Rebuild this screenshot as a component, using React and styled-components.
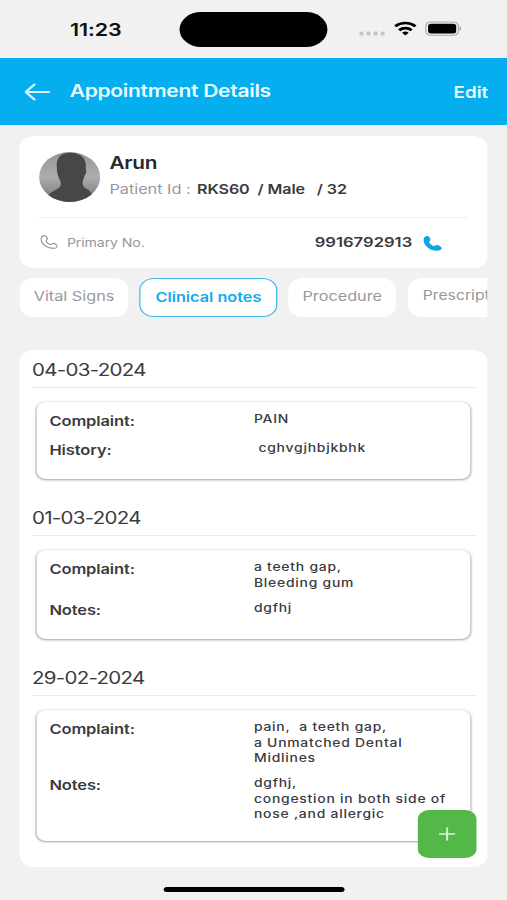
import styled, { createGlobalStyle } from "styled-components";

const GlobalStyle = createGlobalStyle`
  * {
    box-sizing: border-box;
    margin: 0;
    padding: 0;
  }

  body {
    background: #f1f1f1;
    font-family: Inter, "Liberation Sans", sans-serif;
    color: #3a3a40;
    overflow: hidden;
  }
`;

/* The 415px wide layout is stretched to the full 507px width */
const Screen = styled.div`
  position: relative;
  width: 415px;
  height: 900px;
  transform: scaleX(1.2217);
  transform-origin: 0 0;
  background: #f1f1f1;
  overflow: hidden;
  display: flex;
  flex-direction: column;
`;

const Text = styled.span`
  display: block;
  white-space: pre;
  font-size: ${(p) => p.$size}px;
  line-height: ${(p) => p.$line || 20}px;
  font-weight: ${(p) => p.$weight || 400};
  letter-spacing: ${(p) => p.$spacing || 0}px;
  color: ${(p) => p.$color || "inherit"};
`;

const StatusBar = styled.div`
  display: flex;
  height: 58px;
  flex-shrink: 0;
  padding: 12px 36px 0 57.3px;
`;

const Clock = styled.div`
  width: 90px;
  padding-top: 8px;
`;

const Island = styled.div`
  width: 121px;
  height: 35px;
  border-radius: 18px;
  background: #000;
`;

const StatusIcons = styled.div`
  display: flex;
  margin-left: 25.6px;
  padding-top: 9px;

  svg {
    display: block;
  }
`;

const Header = styled.header`
  display: flex;
  align-items: center;
  height: 67px;
  flex-shrink: 0;
  background: #04aeef;
  padding: 0 15.4px 0 20px;

  svg {
    margin-right: 16px;
  }
`;

const HeaderTitle = styled.h1`
  flex: 1;
  padding-bottom: 2px;
`;

const EditLink = styled.div`
  padding-top: 2px;
`;

const Content = styled.main`
  padding: 11px 15.6px 0 16.4px;
  display: flex;
  flex-direction: column;
`;

const Card = styled.section`
  background: #fff;
  border-radius: 12px;
`;

const PatientCard = styled(Card)`
  height: 132px;
  padding: 16px 16px 0 15.2px;
`;

const Profile = styled.div`
  display: flex;
  gap: 8px;
  height: 66px;
  border-bottom: 1px solid #f0f0f0;
`;

const ProfileText = styled.div`
  display: flex;
  flex-direction: column;
  gap: 6px;
  padding-top: 0.5px;
`;

const PatientLine = styled.div`
  display: flex;
  gap: 5.3px;
`;

const PhoneRow = styled.div`
  display: flex;
  align-items: center;
  padding-top: 13px;

  > svg {
    margin: 0 7.6px 0 1.2px;
  }
`;

const PrimaryLabel = styled.div`
  padding-top: 2px;
`;

const PhoneNumber = styled.div`
  display: flex;
  align-items: center;
  width: 104px;
  margin-left: auto;
  margin-right: 21.8px;
  justify-content: space-between;

  svg {
    margin-top: 2px;
  }
`;

const Tabs = styled.nav`
  display: flex;
  gap: 9.7px;
  margin-top: 10px;
  overflow: hidden;
`;

const Tab = styled.button`
  flex: 0 0 ${(p) => p.$width}px;
  height: 39px;
  border: 1px solid ${(p) => (p.$active ? "#3db9e8" : "#fff")};
  border-radius: 12px;
  background: #fff;
  font-family: inherit;
  display: flex;
  justify-content: center;
  padding-top: ${(p) => (p.$active ? 8 : 7)}px;
`;

const NotesCard = styled(Card)`
  height: 517px;
  margin-top: 33px;
  padding: 0 9.6px 0 9.8px;
`;

const Visit = styled.article`
  padding-top: ${(p) => (p.$first ? 8 : 27)}px;
`;

const VisitDate = styled.h2`
  height: 30px;
  padding-top: 1px;
  border-bottom: 1px solid #ebebeb;
`;

const VisitBox = styled.div`
  margin: 14px 4.4px 0 4.1px;
  padding: 10.4px 10px 8.6px 10.2px;
  background: #fff;
  border-radius: 8px;
  box-shadow: 0 1px 2px rgba(0, 0, 0, 0.32), 0 0 3px rgba(0, 0, 0, 0.12);
`;

const VisitRow = styled.div`
  display: flex;
  min-height: 19px;
  margin-bottom: 10px;
`;

const RowLabel = styled.div`
  width: 167.4px;
`;

const AddButton = styled.button`
  position: absolute;
  left: 341.6px;
  top: 809.5px;
  width: 48.5px;
  height: 48px;
  border: 0;
  border-radius: 9px;
  background: #53b848;
  display: flex;
  align-items: center;
  justify-content: center;
`;

const HomeIndicator = styled.div`
  width: 148px;
  height: 5px;
  margin: 20px auto 0 133.8px;
  border-radius: 3px;
  background: #000;
`;

const PHONE_PATH =
  "M6.200 2C4 2 2 4.500 2 7.200 2 15 9.500 22 17.200 22c2.800 0 5-1.800 5-3.900 0-1.400-3.200-3.700-4.700-3.900-1.600-.2-2.200 1.700-3.700 1.700-1.900 0-5.600-3.800-5.600-5.700 0-1.400 1.600-2 1.600-3.500C9.800 5.300 7.800 2 6.200 2z";

const HANDSET_PATH =
  "M6.600 1.800C4.500 1.200 2 3.500 2 6.800 2 15 9 22 17 22c3 0 5.500-1.700 5.500-3.800 0-1.500-3.300-4-5-4.300-1.700-.3-2.300 1.700-3.800 1.700-2 0-5.400-3.600-5.400-5.500 0-1.400 1.500-2 1.500-3.600 0-1.500-1.700-4.300-3.200-4.700z";

function Signal() {
  return (
    <svg width="84" height="15" viewBox="0 0 84 15">
      <g fill="#c4c4c4">
        <rect x="0.1" y="10.600" width="3.500" height="3.800" rx="1.500" />
        <rect x="5.900" y="10.600" width="3.500" height="3.800" rx="1.500" />
        <rect x="11.700" y="10.600" width="3.500" height="3.800" rx="1.500" />
        <rect x="17.500" y="10.600" width="3.500" height="3.800" rx="1.500" />
      </g>
      <g fill="none" stroke="#000" strokeWidth="2.6">
        <path d="M29.500 5.400a12 12 0 0 1 16.600 0" />
        <path d="M32.700 9.200a7.400 7.400 0 0 1 10.200 0" />
      </g>
      <path d="M37.800 14.500l-2.700-2.700a3.900 3.900 0 0 1 5.400 0z" fill="#000" />
      <rect x="54.600" y="1" width="26.6" height="13.200" rx="4" fill="none" stroke="#a9a9a9" />
      <rect x="56.400" y="2.800" width="23" height="9.600" rx="2.500" fill="#000" />
      <path d="M82.300 5.600v4c1.600-.6 1.600-3.400 0-4z" fill="#999" />
    </svg>
  );
}

function Avatar() {
  return (
    <svg width="50" height="50" viewBox="0 0 50 50">
      <defs>
        <linearGradient id="avatarBg" x1="0" y1="0" x2="0" y2="1">
          <stop offset="0" stopColor="#969696" />
          <stop offset="0.5" stopColor="#aeacad" />
          <stop offset="1" stopColor="#757575" />
        </linearGradient>
        <clipPath id="avatarClip">
          <circle cx="25" cy="25" r="25" />
        </clipPath>
      </defs>
      <g clipPath="url(#avatarClip)">
        <rect width="50" height="50" fill="url(#avatarBg)" />
        <path
          d="M26.500 .8C18 .2 14.300 6 14.400 13c.1 5 .4 9 1.400 12 .8 2.500 2 4 2 6.500 0 3.300-1.800 5-4.300 6.500C10 40.300 7 42 5 50h40c-1-6-1.500-8.500-4.500-12-2.500-1.700-5-3.500-4.900-7 .1-2.500 1.200-4.700 1.600-7.500 1.300-1.200 1.800-4.500 1-6.500C39 8 36 1.800 26.500 .8z"
          fill="#474747"
        />
      </g>
    </svg>
  );
}

const tabs = [
  { name: "Vital Signs", width: 88.4 },
  { name: "Clinical notes", width: 112.2, active: true },
  { name: "Procedure", width: 87.6 },
  { name: "Prescription", width: 98, size: 12.9 },
];

const visits = [
  {
    date: "04-03-2024",
    rows: [
      { label: "Complaint:", lines: ["PAIN"] },
      { label: "History:", lines: [" cghvgjhbjkbhk"] },
    ],
  },
  {
    date: "01-03-2024",
    rows: [
      { label: "Complaint:", lines: ["a teeth gap,", "Bleeding gum"] },
      { label: "Notes:", lines: ["dgfhj"] },
    ],
  },
  {
    date: "29-02-2024",
    rows: [
      {
        label: "Complaint:",
        lines: ["pain,  a teeth gap,", "a Unmatched Dental", "Midlines"],
      },
      {
        label: "Notes:",
        lines: ["dgfhj,", "congestion in both side of", "nose ,and allergic"],
      },
    ],
  },
];

function App() {
  return (
    <>
      <GlobalStyle />
      <Screen>
        <StatusBar>
          <Clock>
            <Text $size={17.6} $weight={600} $color="#111" $spacing={-0.1}>
              11:23
            </Text>
          </Clock>
          <Island />
          <StatusIcons>
            <Signal />
          </StatusIcons>
        </StatusBar>

        <Header>
          <svg width="21" height="18" viewBox="0 0 21 18" fill="none" stroke="#d9f6ff" strokeWidth="1.9" strokeLinecap="round" strokeLinejoin="round">
            <path d="M20 9H1M8.200 1.500L1 9l7.200 7.500" />
          </svg>
          <HeaderTitle>
            <Text $size={17.2} $weight={600} $color="#e8fbff" $spacing={-0.23}>
              Appointment Details
            </Text>
          </HeaderTitle>
          <EditLink>
            <Text $size={15.4} $weight={600} $color="#e8fbff">
              Edit
            </Text>
          </EditLink>
        </Header>

        <Content>
          <PatientCard>
            <Profile>
              <Avatar />
              <ProfileText>
                <Text $size={17} $weight={600} $color="#26262c" $spacing={-0.2}>
                  Arun
                </Text>
                <PatientLine>
                  <Text $size={13.4} $color="#98989c" $spacing={-0.05}>
                    Patient Id :
                  </Text>
                  <Text $size={13.2} $weight={600} $spacing={-0.08}>
                    {"RKS60  / Male   / 32"}
                  </Text>
                </PatientLine>
              </ProfileText>
            </Profile>
            <PhoneRow>
              <svg width="14.4" height="14" viewBox="1 1 22 22" preserveAspectRatio="none" fill="none" stroke="#98989c" strokeWidth="1.7">
                <path d={PHONE_PATH} />
              </svg>
              <PrimaryLabel>
                <Text $size={11.6} $color="#98989c" $spacing={-0.1}>
                  Primary No.
                </Text>
              </PrimaryLabel>
              <PhoneNumber>
                <Text $size={13.6} $weight={600}>
                  9916792913
                </Text>
                <svg width="16" height="17" viewBox="1 1 22 22" fill="#0aa8e6">
                  <path d={HANDSET_PATH} />
                </svg>
              </PhoneNumber>
            </PhoneRow>
          </PatientCard>

          <Tabs>
            {tabs.map((tab) => (
              <Tab key={tab.name} $width={tab.width} $active={tab.active}>
                <Text
                  $size={tab.size || 13.3}
                  $weight={tab.active ? 600 : 400}
                  $color={tab.active ? "#14a9e9" : "#98989c"}
                >
                  {tab.name}
                </Text>
              </Tab>
            ))}
          </Tabs>

          <NotesCard>
            {visits.map((visit, i) => (
              <Visit key={visit.date} $first={i === 0}>
                <VisitDate>
                  <Text $size={16.8} $line={22} $spacing={-0.58}>
                    {visit.date}
                  </Text>
                </VisitDate>
                <VisitBox>
                  {visit.rows.map((row) => (
                    <VisitRow key={row.label}>
                      <RowLabel>
                        <Text $size={13.5} $line={19} $weight={600} $spacing={-0.1}>
                          {row.label}
                        </Text>
                      </RowLabel>
                      <div>
                        {row.lines.map((line) => (
                          <Text key={line} $size={11.4} $line={15.4} $weight={550} $spacing={0.62}>
                            {line}
                          </Text>
                        ))}
                      </div>
                    </VisitRow>
                  ))}
                </VisitBox>
              </Visit>
            ))}
          </NotesCard>
        </Content>

        <HomeIndicator />

        <AddButton>
          <svg width="14" height="14" viewBox="0 0 14 14" stroke="#dcf5d8" strokeWidth="1.6" strokeLinecap="round">
            <path d="M7 1v12M1 7h12" />
          </svg>
        </AddButton>
      </Screen>
    </>
  );
}

export default App;
